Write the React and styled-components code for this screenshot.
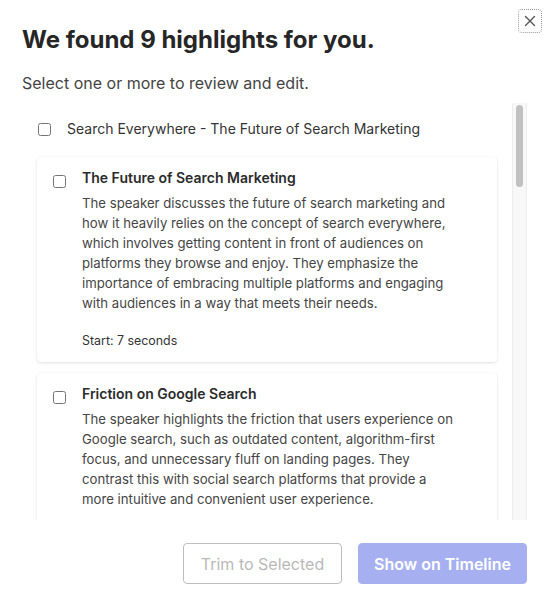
import React from "react";
import styled, { createGlobalStyle } from "styled-components";

const GlobalStyle = createGlobalStyle`
  html, body {
    margin: 0;
    padding: 0;
    background: #ffffff;
  }
  body {
    font-family: Inter, "Noto Sans", sans-serif;
    color: #2b2b2b;
  }
  * {
    box-sizing: border-box;
  }
`;

const Modal = styled.div`
  position: relative;
  display: flex;
  flex-direction: column;
  height: 599px;
  padding: 26px 22px 0 22px;
`;

const CloseButton = styled.button`
  position: absolute;
  top: 9px;
  right: 7px;
  width: 24px;
  height: 24px;
  padding: 0;
  display: flex;
  align-items: center;
  justify-content: center;
  background: #fff;
  border: 1px dotted #9a9a9a;
  border-radius: 4px;
  cursor: pointer;
`;

const Title = styled.h1`
  margin: 0;
  font-size: 24px;
  line-height: 28px;
  font-weight: 700;
  color: #262626;
`;

const Subtitle = styled.p`
  margin: 18px 0 0 0;
  font-size: 16px;
  line-height: 22px;
  color: #444;
`;

const ScrollFrame = styled.div`
  display: flex;
  margin-top: 9px;
  height: 417px;
`;

const ScrollContent = styled.div`
  flex: 1;
  overflow: hidden;
`;

const ScrollTrack = styled.div`
  width: 15px;
  flex-shrink: 0;
  padding: 2px 3px;
  background: #f8f8f8;
  border-left: 1px solid #ededed;
  border-right: 1px solid #ededed;
`;

const ScrollThumb = styled.div`
  height: 82px;
  border-radius: 4px;
  background: #c1c1c1;
`;

const GroupRow = styled.label`
  display: flex;
  align-items: center;
  gap: 16px;
  padding: 16px 0 0 16px;
  font-size: 14px;
  line-height: 20px;
  color: #333;
`;

const Checkbox = styled.input.attrs({ type: "checkbox" })`
  width: 13px;
  height: 13px;
  margin: ${(props) => props.$top || 0}px 0 0 0;
  flex-shrink: 0;
  accent-color: #6b7ae6;
`;

const CardList = styled.div`
  display: flex;
  flex-direction: column;
  gap: 11px;
  margin: 18px 15px 0 15px;
`;

const Card = styled.div`
  display: flex;
  align-items: flex-start;
  gap: 16px;
  padding: 11px 38px 13px 16px;
  background: #fff;
  border-radius: 4px;
  box-shadow: 0 1px 3px rgba(0, 0, 0, 0.12), 0 0 1px rgba(0, 0, 0, 0.06);
`;

const CardBody = styled.div`
  display: flex;
  flex-direction: column;
`;

const CardTitle = styled.div`
  font-size: 14px;
  line-height: 20px;
  font-weight: 600;
  color: #2b2b2b;
  margin-bottom: 5px;
`;

const CardText = styled.p`
  margin: 0;
  font-size: 13.2px;
  line-height: 20px;
  color: #454545;
`;

const StartTime = styled.div`
  margin-top: 20px;
  font-size: 12.4px;
  line-height: 16px;
  color: #333;
`;

const Footer = styled.div`
  display: flex;
  justify-content: flex-end;
  gap: 16px;
  margin-top: 23px;
`;

const FooterButton = styled.button`
  height: 41px;
  padding: 0;
  border-radius: 4px;
  font-family: Inter, "Noto Sans", sans-serif;
  font-size: 16px;
  white-space: nowrap;
  cursor: default;
  border: 1px solid ${(props) => (props.$primary ? "#a6b0f1" : "#bdbdbd")};
  background: ${(props) => (props.$primary ? "#a6b0f1" : "#fff")};
  color: ${(props) => (props.$primary ? "#fff" : "#b9b9b9")};
  font-weight: ${(props) => (props.$primary ? 600 : 400)};
  width: ${(props) => props.$width}px;
`;

const highlights = [
  {
    title: "The Future of Search Marketing",
    text: "The speaker discusses the future of search marketing and how it heavily relies on the concept of search everywhere, which involves getting content in front of audiences on platforms they browse and enjoy. They emphasize the importance of embracing multiple platforms and engaging with audiences in a way that meets their needs.",
    start: "Start: 7 seconds",
  },
  {
    title: "Friction on Google Search",
    text: "The speaker highlights the friction that users experience on Google search, such as outdated content, algorithm-first focus, and unnecessary fluff on landing pages. They contrast this with social search platforms that provide a more intuitive and convenient user experience.",
    start: "Start: 42 seconds",
  },
];

export default function App() {
  return (
    <>
      <GlobalStyle />
      <Modal>
        <CloseButton aria-label="Close">
          <svg width="12" height="12" viewBox="0 0 12 12">
            <path d="M1.5 1.5 L10.5 10.5 M10.5 1.5 L1.5 10.5" stroke="#555" strokeWidth="1.4" strokeLinecap="round" />
          </svg>
        </CloseButton>
        <Title>We found 9 highlights for you.</Title>
        <Subtitle>Select one or more to review and edit.</Subtitle>
        <ScrollFrame>
          <ScrollContent>
            <GroupRow>
              <Checkbox />
              Search Everywhere - The Future of Search Marketing
            </GroupRow>
            <CardList>
              {highlights.map((h) => (
                <Card key={h.title}>
                  <Checkbox $top={7} />
                  <CardBody>
                    <CardTitle>{h.title}</CardTitle>
                    <CardText>{h.text}</CardText>
                    <StartTime>{h.start}</StartTime>
                  </CardBody>
                </Card>
              ))}
            </CardList>
          </ScrollContent>
          <ScrollTrack>
            <ScrollThumb />
          </ScrollTrack>
        </ScrollFrame>
        <Footer>
          <FooterButton $width={159}>Trim to Selected</FooterButton>
          <FooterButton $primary $width={169}>Show on Timeline</FooterButton>
        </Footer>
      </Modal>
    </>
  );
}
